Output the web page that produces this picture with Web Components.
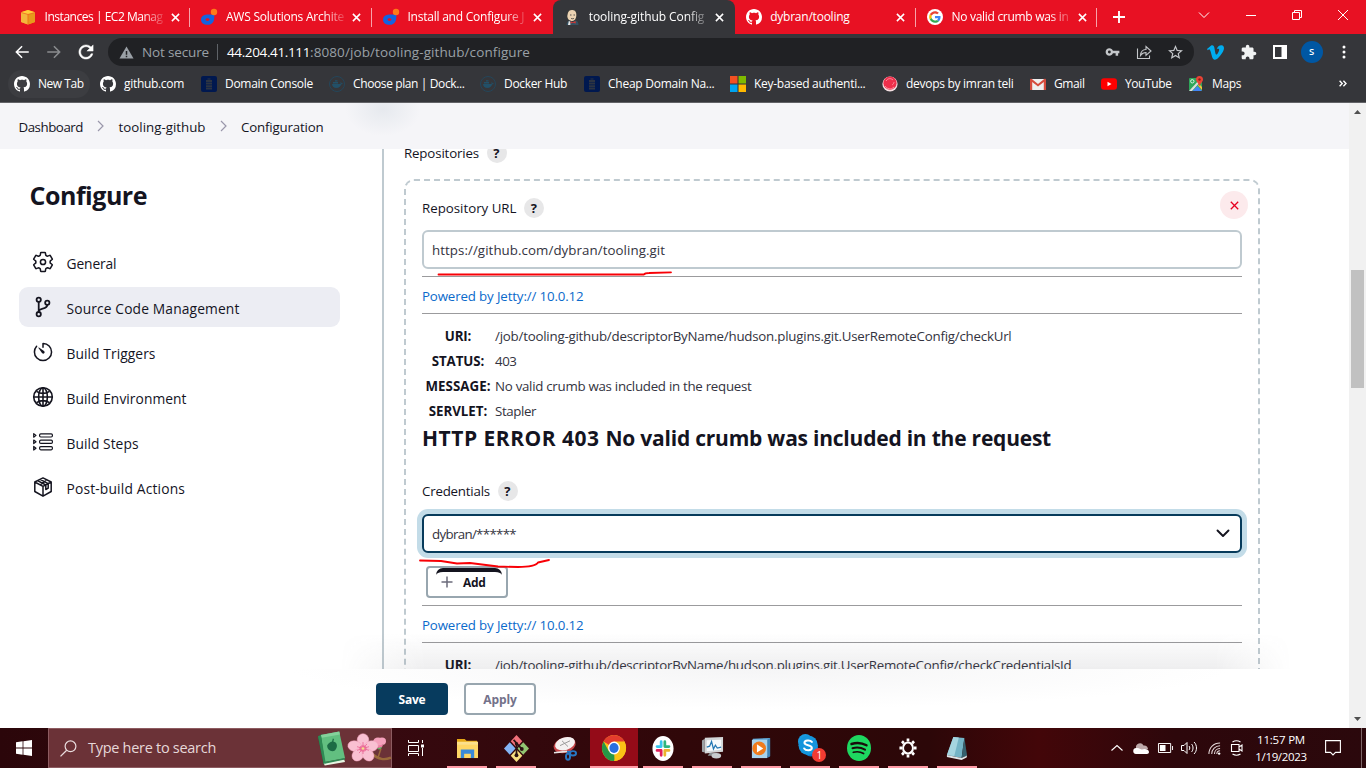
<!DOCTYPE html>
<html lang="en">
<head>
<meta charset="utf-8">
<title>tooling-github Config [Jenkins]</title>
<style>
html,body{margin:0;height:100%;overflow:hidden;background:#fff}
body{font-family:"Open Sans","Noto Sans",sans-serif}
</style>
</head>
<body>
<desktop-screen></desktop-screen>
<script>
const GH='<path fill="#fff" d="M8 0C3.58 0 0 3.58 0 8c0 3.54 2.29 6.53 5.47 7.59.4.07.55-.17.55-.38 0-.19-.01-.82-.01-1.49-2.01.37-2.53-.49-2.69-.94-.09-.23-.48-.94-.82-1.13-.28-.15-.68-.52-.01-.53.63-.01 1.08.58 1.23.82.72 1.21 1.87.87 2.33.66.07-.52.28-.87.51-1.07-1.78-.2-3.64-.89-3.64-3.95 0-.87.31-1.59.82-2.15-.08-.2-.36-1.02.08-2.12 0 0 .67-.21 2.2.82.64-.18 1.32-.27 2-.27s1.36.09 2 .27c1.53-1.04 2.2-.82 2.2-.82.44 1.1.16 1.92.08 2.12.51.56.82 1.27.82 2.15 0 3.07-1.87 3.75-3.65 3.95.29.25.54.73.54 1.48 0 1.07-.01 1.93-.01 2.2 0 .21.15.46.55.38A8.01 8.01 0 0 0 16 8c0-4.42-3.58-8-8-8z"/>';
/* name: [viewBox, markup] */
const ICONS={
github:['0 0 16 16',GH],
ec2:['0 0 16 16','<path fill="#f9a90f" d="M1 3.2 8 1l7 2.2v9.9L8 15.5 1 13.1z"/><path fill="#f3b73c" d="M1 3.6 7.7 5.4v10L1 13.1z"/><path fill="#e79a1c" d="M8.3 5.4 15 3.6v9.5l-6.7 2.4z"/><path fill="#ffce3a" d="M1 3.3 8 1l7 2.3-7 1.9z"/><path stroke="#e8402a" stroke-width=".5" fill="none" d="M1 3.5 8 5.4l7-1.9M8 5.4v10"/>'],
drop:['0 0 16 16','<path fill="#1463e0" d="M13.200 5.200C13.800 11 12.500 15.800 6.500 15.800 2.700 15.800 0 13.800 0 10.800 0 7.500 2.500 5.700 6 5.500c3-.2 5.200.3 7.200-.3z"/><circle cx="13" cy="3" r="3.200" fill="#ff7a18"/><ellipse cx="6.500" cy="10.600" rx="1.900" ry="1.400" fill="#e81123"/>'],
jenkins:['0 0 16 16','<path fill="#3a3a38" d="M2.800 6C2.500 2 5 0 8.500.2c3.500.2 5 2.600 4.800 6.300l-.8 5H4z"/><path fill="#ecd3b2" d="M3.800 4.500C4.300 2 6.300.9 8.500 1.100c3 .3 4.200 2.600 3.800 6-.3 2.600-1.500 4.800-4 4.800-2.600 0-5-2-5-5z"/><path fill="#335061" d="M2.500 16c0-2.500 1.500-4 3.500-4.500L8.500 13l3-1.500c2 .5 3 2 3 4.500z"/><path fill="#d33833" d="m6.500 12.200 2.300 1.100 2.700-1.300.3 2.500-2.700-.8-2.600.9z"/><path stroke="#333" stroke-width=".8" fill="none" d="M6 6h1.500M9.500 6H11M7 9.300c1 .6 2 .6 3 0"/><path fill="#e5e5e5" d="m4.800 12 1.300.5.3 3.500H4z"/>'],
google:['-4 -4 56 56','<circle cx="24" cy="24" r="28" fill="#fff"/><g transform="translate(3.500 3.500) scale(.85)"><path fill="#EA4335" d="M24 9.500c3.540 0 6.710 1.220 9.210 3.600l6.850-6.850C35.900 2.380 30.470 0 24 0 14.620 0 6.510 5.380 2.560 13.220l7.980 6.190C12.430 13.720 17.740 9.500 24 9.500z"/><path fill="#4285F4" d="M46.980 24.550c0-1.570-.15-3.090-.38-4.550H24v9.020h12.940c-.58 2.960-2.260 5.480-4.780 7.180l7.730 6c4.510-4.180 7.090-10.360 7.090-17.650z"/><path fill="#FBBC05" d="M10.530 28.590c-.48-1.450-.76-2.990-.76-4.590s.27-3.140.76-4.590l-7.980-6.190C.92 16.460 0 20.120 0 24c0 3.880.92 7.540 2.560 10.780l7.970-6.190z"/><path fill="#34A853" d="M24 48c6.480 0 11.930-2.130 15.890-5.810l-7.730-6c-2.150 1.450-4.920 2.300-8.160 2.300-6.260 0-11.570-4.220-13.470-9.910l-7.980 6.190C6.510 42.620 14.620 48 24 48z"/></g>'],
close:['0 0 10 10','<path stroke="currentColor" stroke-width="1.700" d="m1 1 8 8M9 1 1 9"/>'],
thinclose:['0 0 10 10','<path stroke="currentColor" stroke-width="1" d="m0 0 10 10M10 0 0 10"/>'],
plus:['0 0 14 14','<path stroke="currentColor" stroke-width="2.200" d="M7 0v14M0 7h14"/>'],
down:['0 0 12 12','<path stroke="currentColor" fill="none" d="m1 3.500 5 5 5-5"/>'],
min:['0 0 10 10','<path stroke="currentColor" d="M0 5.500h10"/>'],
restore:['0 0 10 10','<path stroke="currentColor" fill="none" d="M.5 2.500h7v7h-7zM2.500 2.500v-2h7v7h-2"/>'],
back:['0 0 24 24','<path fill="currentColor" d="M21 11H6.830l6-6-1.430-1.400L3 12l8.400 8.400 1.430-1.400-6-6H21z"/>'],
fwd:['0 0 24 24','<path fill="currentColor" d="M3 11h14.170l-6-6 1.430-1.400L21 12l-8.400 8.400-1.430-1.400 6-6H3z"/>'],
reload:['3 3 18 18','<path fill="currentColor" stroke="currentColor" stroke-width=".5" d="M17.650 6.350C16.200 4.900 14.210 4 12 4c-4.420 0-7.990 3.580-7.990 8s3.570 8 7.990 8c3.730 0 6.840-2.550 7.730-6h-2.080c-.82 2.330-3.040 4-5.650 4-3.310 0-6-2.690-6-6s2.690-6 6-6c1.660 0 3.140.69 4.220 1.780L13 11h7V4l-2.350 2.350z"/>'],
warn:['0 0 16 14','<path fill="#9aa0a6" d="M8 .5 15.500 13.500H.5z"/><path fill="#202124" d="M7.200 5.500h1.600v4H7.200zM7.200 10.500h1.600V12H7.200z"/>'],
key:['0 4 24 16','<path fill="currentColor" d="M12.650 10C11.830 7.670 9.610 6 7 6c-3.310 0-6 2.690-6 6s2.690 6 6 6c2.610 0 4.830-1.670 5.650-4H17v4h4v-4h2v-4H12.650zM7 14.300a2.300 2.300 0 1 1 0-4.600 2.300 2.300 0 0 1 0 4.600z"/>'],
share:['0 0 16 16','<path fill="none" stroke="currentColor" stroke-width="1.100" d="M1.500 4.500v10h12v-3M4.500 11.500c.3-4 2.200-6 5.500-6V2.500L15 7l-5 4.300V8.500c-2.500 0-4 .8-5.500 3z"/>'],
star:['2 2 20 19','<path fill="currentColor" d="M22 9.240l-7.190-.62L12 2 9.190 8.630 2 9.240l5.460 4.730L5.820 21 12 17.270 18.180 21l-1.630-7.030L22 9.240zM12 15.400l-3.760 2.270 1-4.280-3.320-2.880 4.380-.38L12 6.100l1.710 4.040 4.380.38-3.320 2.880 1 4.280L12 15.400z"/>'],
vimeo:['0 0 24 24','<path fill="#00adef" d="M23.977 6.416c-.105 2.338-1.739 5.543-4.894 9.609-3.268 4.247-6.026 6.370-8.290 6.370-1.409 0-2.578-1.294-3.553-3.881L5.322 11.400C4.603 8.816 3.834 7.522 3.010 7.522c-.179 0-.806.378-1.881 1.132L0 7.197c1.185-1.044 2.351-2.084 3.501-3.128C5.080 2.701 6.266 1.984 7.055 1.910c1.867-.18 3.016 1.100 3.447 3.838.465 2.953.789 4.789.971 5.507.539 2.450 1.131 3.674 1.776 3.674.502 0 1.256-.796 2.265-2.385 1.004-1.589 1.540-2.797 1.612-3.628.144-1.371-.395-2.061-1.614-2.061-.574 0-1.167.121-1.777.391 1.186-3.868 3.434-5.757 6.762-5.637 2.473.06 3.628 1.664 3.493 4.797z"/>'],
puzzle:['1 0 23 23','<path fill="#f1f3f4" d="M20.500 11H19V7c0-1.100-.9-2-2-2h-4V3.500C13 2.120 11.880 1 10.500 1S8 2.120 8 3.500V5H4c-1.100 0-1.990.9-1.990 2v3.800H3.500c1.490 0 2.700 1.210 2.700 2.700s-1.210 2.700-2.700 2.700H2V20c0 1.100.9 2 2 2h3.800v-1.500c0-1.490 1.210-2.700 2.700-2.700s2.700 1.210 2.700 2.700V22H17c1.100 0 2-.9 2-2v-4h1.500c1.380 0 2.500-1.120 2.500-2.500S21.880 11 20.500 11z"/>'],
panel:['0 0 14 14','<path fill="#fff" fill-rule="evenodd" d="M0 0h14v14H0zM2 2v10h6.500V2z"/>'],
dots:['0 0 4 14','<circle cx="2" cy="2" r="1.500" fill="#fff"/><circle cx="2" cy="7" r="1.500" fill="#fff"/><circle cx="2" cy="12" r="1.500" fill="#fff"/>'],
domain:['0 0 16 16','<rect width="16" height="16" rx="2" fill="#00184f"/><path fill="#2d3442" d="M6.500 2.500h3v1h-3zM5 4h6v2H5zM5 6.600h6v2H5zM5 9.200h6v2H5zM5 11.800h6v1.600H5z"/>'],
docker:['0 0 16 16','<circle cx="8" cy="8" r="7.500" fill="none" stroke="#24465a" stroke-width="1"/><path fill="#225068" d="M3 8h8.500c.3-1 .2-1.500-.3-2.200.8.2 1.200.7 1.300 1.500.5-.1 1 0 1.300.3-.4.7-1 .9-1.700.9-.7 2.200-2.300 3.400-4.600 3.400C5 11.900 3.200 10.500 3 8zM4 6h5v1.500H4zM6 4.300h2.500v1.300H6z"/>'],
ms:['0 0 15 15','<path fill="#f25022" d="M0 0h7v7H0z"/><path fill="#7fba00" d="M8 0h7v7H8z"/><path fill="#00a4ef" d="M0 8h7v7H0z"/><path fill="#ffb900" d="M8 8h7v7H8z"/>'],
ball:['0 0 16 16','<circle cx="8" cy="8" r="7.600" fill="#f3dfe1"/><circle cx="8" cy="7.200" r="6.600" fill="#ef2f4b"/><path d="M4 5c2-3 5-3 7-1M10 9c1-.5 2-2 2-3M3 10c2 3 6 4 9 1" stroke="#ff8d9c" fill="none"/>'],
gmail:['0 0 16 16','<path fill="#eee" d="M1 3h14v11H1z"/><path fill="#d54b3d" d="M0 4c0-1 .8-1.500 1.500-1.300L8 8l6.500-5.300C15.300 2.500 16 3 16 4v10h-2.200V6L8 10.600 2.200 6v8H0z"/>'],
yt:['0 0 16 16','<rect y="2.300" width="16" height="11.400" rx="3" fill="red"/><path fill="#fff" d="m6.500 5.800 4 2.200-4 2.200z"/>'],
maps:['0 0 16 16','<rect x="1" y="2" width="13" height="13" rx="1" fill="#2fa65a"/><path fill="#dcdcdc" d="m1 15 12-13h1v2L4 15z"/><path fill="#4285f4" d="M7 12.500 9.500 10l4.500 5H4.500z"/><path fill="#f5c33b" d="m10 9.500 1.300-1.300L14 11v3z"/><circle cx="4.300" cy="5.300" r="1.700" fill="none" stroke="#fff" stroke-width=".8"/><path fill="#ea4335" d="M11.500 0a3.500 3.500 0 0 1 3.500 3.500c0 2.200-2.500 3.500-3.500 7-1-3.500-3.500-4.800-3.500-7A3.500 3.500 0 0 1 11.500 0z"/><circle cx="11.500" cy="3.500" r="1.200" fill="#8c1f17"/>'],
more:['0 0 8 7','<path fill="none" stroke="#fff" stroke-width="1.400" d="m.6.8 2.600 2.700L.6 6.200M4.400.8 7 3.500 4.400 6.200"/>'],
crumb:['0 0 7 12','<path fill="none" stroke="#9a97ab" stroke-width="1.200" d="m1 1 5 5-5 5"/>'],
gear:['32 32 448 448','<g fill="none" stroke="currentColor" stroke-width="34" stroke-linejoin="round"><circle cx="256" cy="256" r="58"/><path d="M416.390 256a154.340 154.340 0 01-1.530 20.790l45.210 35.460a10.810 10.810 0 012.450 13.750l-42.770 74a10.810 10.810 0 01-13.140 4.590l-44.900-18.080a16.110 16.110 0 00-15.170 1.750A164.480 164.480 0 01325 400.800a15.940 15.940 0 00-8.820 12.140l-6.730 47.890a11.080 11.080 0 01-10.680 9.170h-85.540a11.110 11.110 0 01-10.690-8.870l-6.720-47.820a16.070 16.070 0 00-9-12.220 155.300 155.300 0 01-21.460-12.570 16 16 0 00-15.110-1.710l-44.890 18.070a10.810 10.810 0 01-13.140-4.580l-42.770-74a10.800 10.800 0 012.450-13.750l38.210-30a16.050 16.050 0 006-14.080c-.36-4.170-.58-8.330-.58-12.500s.21-8.270.58-12.350a16 16 0 00-6.070-13.940l-38.190-30A10.810 10.810 0 0149.480 186l42.770-74a10.810 10.810 0 0113.140-4.590l44.900 18.080a16.110 16.110 0 0015.170-1.750A164.480 164.480 0 01187 111.200a15.940 15.940 0 008.820-12.140l6.730-47.890A11.080 11.080 0 01213.230 42h85.540a11.110 11.110 0 0110.690 8.870l6.720 47.820a16.070 16.070 0 009 12.220 155.300 155.300 0 0121.460 12.570 16 16 0 0015.110 1.710l44.890-18.070a10.810 10.810 0 0113.140 4.580l42.770 74a10.800 10.800 0 01-2.450 13.750l-38.210 30a16.050 16.050 0 00-6.050 14.080c.33 4.140.55 8.300.55 12.470z"/></g>'],
branch:['32 32 448 448','<g fill="none" stroke="currentColor" stroke-width="40" stroke-linecap="round"><circle cx="160" cy="96" r="48"/><circle cx="160" cy="416" r="48"/><circle cx="352" cy="160" r="48"/><path d="M160 368V144M352 208c0 128-192 48-192 160"/></g>'],
timer:['32 32 448 448','<path fill="none" stroke="currentColor" stroke-width="34" stroke-linecap="round" d="M112.910 128A191.850 191.850 0 0064 254c-1.180 106.350 85.650 193.800 192 194 106.200.2 192-85.830 192-192 0-104.540-83.550-189.610-187.500-192a4.360 4.360 0 00-4.500 4.370V152"/><path fill="currentColor" d="M233.380 278.630l-79-113a8.130 8.130 0 0111.320-11.320l113 79a32.500 32.500 0 01-37.250 53.260 33.210 33.210 0 01-8.070-7.940z"/>'],
globe:['32 32 448 448','<g fill="none" stroke="currentColor" stroke-width="36"><circle cx="256" cy="256" r="208"/><ellipse cx="256" cy="256" rx="98" ry="208"/><path d="M256 48v416M48 256h416M110 130c88 55 204 55 292 0M110 382c88-55 204-55 292 0"/></g>'],
list:['0 0 20 20','<g fill="none" stroke="currentColor" stroke-width="1.200" stroke-linejoin="round"><rect x="6.600" y="1.800" width="12.800" height="3.200" rx="1.200"/><rect x="6.600" y="8.200" width="12.800" height="3.200" rx="1.200"/><rect x="6.600" y="14.600" width="12.800" height="3.200" rx="1.200"/><path d="M.7 1.600 3 3.400.7 5.200zM.7 8 3 9.800.7 11.600zM.7 14.400 3 16.200.7 18z"/></g>'],
cube:['0 0 20 20','<g fill="none" stroke="currentColor" stroke-width="1.500" stroke-linejoin="round"><path d="M10 .9 18.200 5v9.500L10 19.200 1.800 14.500V5zM1.800 5 10 9.300 18.200 5M10 9.300v9.700M4.600 3.600 12.800 8v4.500l2.400-1.300V6.700L7.200 2.300M7.200 7.900l6-4.400"/></g>'],
selchev:['0 0 14 9','<path fill="none" stroke="#14141f" stroke-width="1.900" stroke-linecap="round" stroke-linejoin="round" d="m1.500 1.500 5.500 5.500 5.500-5.500"/>'],
del:['0 0 9 9','<path stroke="#e6001f" stroke-width="1.300" d="m.8.8 7.400 7.400M8.200.8.800 8.200"/>'],
addplus:['0 0 12 12','<path stroke="#6b6b7b" stroke-width="1.500" d="M6 .5v11M.5 6h11"/>'],
win:['0 0 16 16','<path fill="#fff" d="m0 2.200 6.600-.9v6.300H0zM7.400 1.200 16 0v7.600H7.400zM0 8.400h6.600v6.300L0 13.800zM7.400 8.400H16V16l-8.600-1.200z"/>'],
search:['0 0 17 17','<circle cx="10.500" cy="6.300" r="5.400" fill="none" stroke="#e9dcdd" stroke-width="1.200"/><path stroke="#e9dcdd" stroke-width="1.300" d="M6.700 10.200.5 16.400"/>'],
book:['0 0 30 36','<path fill="#1e6b3f" d="M1 6 5 3l5 28-3 4z"/><path fill="#e8f5e2" d="m7 33 21-4 1 3-21 3.500z"/><path fill="#62bf80" d="M4 4 23 .5l6 27.500L8 32z"/><path fill="#84d19b" d="M4 4 23 .5l.8 3L5 7z"/><path fill="#2f8a54" d="m1 5.500 3-1.500 5 29-2 1z"/><path fill="#1d6b45" d="M10.500 15c1-3 5-5 7-4 4 1 4 6 1 9-3 2-8 0-8-5z"/><path stroke="#1d6b45" stroke-width="1.300" d="m16 12 1-4"/><path fill="#2f8a54" d="m8 32 20.500-4.200.5 1.500-21 4.300z"/>'],
flower:['0 0 44 36','<path fill="none" stroke="#9a6a3a" stroke-width="2.600" d="M25 24c7 6 12 7 19 4"/><path fill="none" stroke="#9a6a3a" stroke-width="1.500" d="m31 28 3-10"/><g fill="#f5a1bc"><circle cx="31" cy="11" r="5"/><circle cx="35" cy="10" r="4"/></g><path fill="#ef7fa5" d="M29 15c3 4 6 3 7-1z"/><path fill="#69b06a" d="M30 18c2 2 4 1 5-2z"/><g fill="#f9c0d2" stroke="#f2a0bb" stroke-width=".5"><ellipse cx="16" cy="8.800" rx="5.800" ry="7"/><ellipse cx="7.800" cy="15.500" rx="7" ry="5.800" transform="rotate(15 8 15.500)"/><ellipse cx="24.200" cy="15.500" rx="7" ry="5.800" transform="rotate(-15 24 15.500)"/><ellipse cx="11" cy="25" rx="5.600" ry="7" transform="rotate(30 11 25)"/><ellipse cx="21" cy="25" rx="5.600" ry="7" transform="rotate(-30 21 25)"/></g><circle cx="16" cy="18" r="3.600" fill="#ee7da3"/><path stroke="#e85f90" stroke-width=".8" d="M16 11v13M10 16l12 4M12 23l8-10M22 16l-12 4"/><circle cx="16" cy="18" r="1.400" fill="#f3df8a"/>'],
taskview:['0 0 16 16','<path fill="none" stroke="#fff" d="M.5 0v2.500h10V0M.5 5.500h10v6H.5zM.5 16v-2.500h10V16M14.500 0v3M14.500 8v8"/><path fill="#fff" d="M13 4.500h3v3h-3z"/>'],
folder:['0 0 22 22','<path fill="#e6a817" d="M0 1h8l2 2h11v4H0z"/><path fill="#ffd765" d="M0 4h22v17H0z"/><path fill="#fce08b" d="M0 4h22v3H0z"/><path fill="#3b8ad8" d="M4 12h14v9h-3.500v-4.500h-7V21H4z"/>'],
git:['0 0 26 28','<path fill="#f2707a" d="m13 0 6 6.500-6 6.500-6-6.500z"/><path fill="#84b4f5" d="m6 7.500 6 6.500-6 6.500L0 14z"/><path fill="#93c572" d="m20 7.500 6 6.500-6 6.500L14 14z"/><path fill="#f8e080" d="m13 15 6 6.500-6 6.500-6-6.500z"/><path stroke="#2a1212" stroke-width="1.800" fill="none" d="M10 5l8 9M13 8v13"/><circle cx="13" cy="21" r="2" fill="#2a1212"/><circle cx="18.500" cy="14.500" r="2" fill="#2a1212"/><circle cx="13" cy="9" r="1.700" fill="#2a1212"/>'],
snip:['0 0 24 26','<ellipse cx="11.500" cy="9.500" rx="11.300" ry="7.800" fill="#c8464a" transform="rotate(-18 12 9)"/><ellipse cx="12" cy="8" rx="10.300" ry="6.500" fill="#f4f1f1" transform="rotate(-18 12 8)"/><path stroke="#999" d="m7 10 10-5M9 5l6 6"/><path stroke="#e5e5e5" stroke-width="1.600" d="m1 17.500 13-1.500"/><g fill="none" stroke="#2877c4" stroke-width="2"><ellipse cx="15" cy="21.500" rx="2" ry="3.200"/><ellipse cx="20" cy="18" rx="3" ry="2.300"/><path d="m14 16.500 4 0"/></g>'],
chrome:['0 0 24 24','<circle cx="12" cy="12" r="12" fill="#fbc116"/><path fill="#e33b2e" d="M12 12 1.600 6A12 12 0 0 1 22.400 6z"/><path fill="#279847" d="M12 12 12.500 24A12 12 0 0 1 1.600 6l5.200 9z"/><path fill="#fbc116" d="M12 6h10.400A12 12 0 0 1 12 24l5.200-9z"/><circle cx="12" cy="12" r="5.900" fill="#fff"/><circle cx="12" cy="12" r="4.600" fill="#296fe0"/>'],
slack:['0 0 24 26','<ellipse cx="12" cy="13" rx="11.500" ry="13" fill="#fff"/><g stroke-width="3" stroke-linecap="round"><path stroke="#36c5f0" d="M10 6v5M5.500 11H10"/><path stroke="#2eb67d" d="M14 6v5M14 11h4.500"/><path stroke="#e01e5a" d="M10 15v5M5.500 15H10"/><path stroke="#ecb22e" d="M14 15v5M14 15h4.500"/></g>'],
monitor:['0 0 24 26','<path fill="#9da2a6" d="m1 5 3-2v15l-3-1z"/><path fill="#d3d6d8" d="M4 2 23 1v16L4 19z"/><path fill="#f6f9fb" d="M6 4.500 21 4v11L6 16.500z"/><path fill="none" stroke="#2477b3" stroke-width="1.300" d="m6 12 3-1 2-5 2 8 2-4 2 3 4-1"/><path fill="#8c9093" d="M9 18.500h6l2 3H7z"/><ellipse cx="16" cy="21.500" rx="5" ry="3" fill="#c9cccf"/>'],
media:['0 0 22 24','<path fill="#5fa8d8" d="M2 2 21 1v20L2 23z"/><path fill="#a9d3ec" d="M1 3h17v20H1z"/><path fill="#3f83b5" d="M18 3l3-2v20l-3 2z"/><circle cx="9" cy="12.500" r="7.500" fill="#f07b1c"/><path fill="#fff" d="m6.500 8 7 4.500-7 4.500z"/>'],
skype:['0 0 26 30','<circle cx="8" cy="8" r="8" fill="#1a9be0"/><circle cx="14" cy="16" r="8" fill="#0a74c4"/><circle cx="11" cy="12" r="10.500" fill="#1495dc"/><path fill="none" stroke="#fff" stroke-width="2.200" stroke-linecap="round" d="M15 8.500c-2-2.500-8-2-8 1 0 3.500 8 1.800 8 5.500 0 3-6.500 3.300-8.300.5"/>'],
spotify:['0 0 24 26','<ellipse cx="12" cy="13" rx="12" ry="13" fill="#1ed760"/><g fill="none" stroke="#190a0b" stroke-linecap="round"><path stroke-width="2.400" d="M4.500 9c5-1.700 10.500-1.200 15 1.300"/><path stroke-width="2" d="M5.500 13.300c4.500-1.300 8.500-.8 12.500 1.400"/><path stroke-width="1.700" d="M6.300 17.300c3.500-1 7-.7 10.300 1.200"/></g>'],
cog:['0 0 20 20','<circle cx="10" cy="10" r="5.500" fill="none" stroke="#fff" stroke-width="2.200"/><path stroke="#fff" stroke-width="3" d="M10 .5v3M10 16.500v3M.5 10h3M16.500 10h3M3.300 3.300l2.100 2.100M14.600 14.600l2.100 2.100M3.300 16.700l2.100-2.100M14.600 5.400l2.100-2.100"/>'],
note:['0 0 24 24','<path fill="#74b4c6" d="m8 1 12 1-3 20L1 19z"/><path fill="#a5d5e0" d="m8 1 6 .6L9 20l-8-1z"/><path fill="#35616e" d="m20 1.500 3 18-6 2.500z"/><path fill="#dfe6e8" d="m1 19 16 3 6-2.500-.5 2L17 24 1 21z"/>'],
up:['0 0 12 8','<path fill="none" stroke="#fff" stroke-width="1.100" d="m.5 6.500 5.500-5 5.500 5"/>'],
cloud:['0 0 16 11','<path fill="#bda9aa" d="M3 5a4 4 0 0 1 7.500-2.500C13 2 15 4 15 6l-9 2z"/><path fill="#fff" d="M3 11a3 3 0 0 1 .5-6C6 4.500 7 6 9 6.500c3-1.500 7 0 7 2.500 0 1.200-1 2-2 2z"/>'],
battery:['0 0 16 10','<path fill="none" stroke="#fff" d="M.5.5h13v9H.5zM15.500 3v4"/><path fill="#fff" d="M2 2h6v6H2z"/>'],
speaker:['0 0 17 14','<path fill="none" stroke="#fff" d="M.5 4.500h2.500l3-3v11l-3-3H.500zM8 5c1 1 1 3 0 4M10.500 3c2 2 2 6 0 8M13 1c3.300 3 3.300 9 0 12"/>'],
wifi:['0 0 14 14','<g fill="none" stroke="#e7dadb" stroke-width="1.100"><path d="M1 13C1 6 6 1 13 1M4 13c0-5 4-9 9-9M7 13c0-3.500 2.500-6 6-6"/><path d="M9.500 13c0-2 1.500-3.500 3.500-3.500"/></g><circle cx="12" cy="12.500" r="1.300" fill="#fff"/>'],
cam:['0 0 12 16','<path fill="none" stroke="#fff" stroke-width="1.100" d="M.5 4.500h7.500v7H.5zM8 7l3-2v6L8 9M1.500 2c2.500-1.500 5.500-1.500 8 0M1.500 14c2.500 1.500 5.500 1.500 8 0"/>'],
notif:['0 0 16 16','<path fill="none" stroke="#fff" stroke-width="1.100" d="M.6.6h14.800v11.800h-4.900L8 15l-2.500-2.600H.6z"/>'],
tri:['0 0 8 4','<path fill="#505050" d="M0 4 4 0l4 4z"/>']
};
const fits=[];
const el=(name,css,html,after)=>customElements.define(name,class extends HTMLElement{
  constructor(){super();this.attachShadow({mode:'open'});}
  connectedCallback(){
    if(this.shadowRoot.firstChild)return;
    const t=document.createElement('template');
    t.innerHTML='<style>*{box-sizing:border-box}'+css+'</style>'+(typeof html==='function'?html(this):html);
    this.shadowRoot.append(t.content.cloneNode(true));
    if(after)after(this);
  }
});
const ic=(n,w,h=w,c='')=>`<ui-icon name="${n}" w="${w}" h="${h}" style="${c}"></ui-icon>`;
const tx=(s,w,c='')=>`<ui-text w="${w}" style="${c}">${s}</ui-text>`;

el('ui-text',':host{display:inline-block;white-space:pre;line-height:1;flex:none}span{display:inline-block;white-space:pre}','<span><slot></slot></span>',e=>fits.push(e));
el('ui-icon',':host{display:block;flex:none}svg{display:block;overflow:visible}',e=>{const[v,m]=ICONS[e.getAttribute('name')];return `<svg width="${e.getAttribute('w')}" height="${e.getAttribute('h')}" viewBox="${v}" preserveAspectRatio="none">${m}</svg>`;});

/* browser frame */
el('browser-tab',`:host{display:flex;width:181.400px;height:34px;padding:0 0 0 11px;align-items:center;color:#fff;font-size:12px;position:relative;flex:none}
 :host([sep])::after{content:"";position:absolute;right:0;top:8px;width:1px;height:19px;background:#f7a3aa}
 :host([active]){background:#35363a;border-radius:8px 8px 0 0}
 .t{width:119px;margin-left:8.600px;overflow:hidden;line-height:20px;display:flex;align-items:center;height:20px}
 :host([fade]) .t{-webkit-mask-image:linear-gradient(90deg,#000 82%,rgba(0,0,0,.15));mask-image:linear-gradient(90deg,#000 82%,rgba(0,0,0,.15))}`,
 e=>`${ic(e.getAttribute('icon'),16)}<div class="t"><slot></slot></div>${ic('close',9,9,'margin-left:7px')}`);
el('tab-strip',`:host{display:flex;height:34px;background:#e81123;padding-left:9px;align-items:center;color:#fff}
 .w{display:flex;margin-left:auto;align-items:center;height:34px;padding:0 18px 5px 0}.w ui-icon+ui-icon{margin-left:36px}`,
 `<browser-tab icon="ec2" sep fade>${tx('Instances | EC2 Manag',118)}</browser-tab><browser-tab icon="drop" sep fade>${tx('AWS Solutions Archite',118)}</browser-tab><browser-tab icon="drop" fade>${tx('Install and Configure J',117)}</browser-tab><browser-tab icon="jenkins" active fade>${tx('tooling-github Config',115.500)}</browser-tab><browser-tab icon="github" sep>${tx('dybran/tooling',79.500)}</browser-tab><browser-tab icon="google" sep fade>${tx('No valid crumb was in',117)}</browser-tab>
 ${ic('plus',12,12,'margin-left:16px')}<div class="w">${ic('down',12)}${ic('min',10)}${ic('restore',10)}${ic('thinclose',10)}</div>`);
el('tool-bar',`:host{display:flex;height:34px;align-items:center;background:#35363a;padding:0 20px 0 14px;color:#fff;font-size:13.500px}
 .o{display:flex;align-items:center;height:28px;width:1086px;margin:2px 0 0 14px;border-radius:14px;background:#202124;padding:0 10px 0 11px;color:#9aa0a6}
 .o>ui-text{margin-top:1px}
 .s{width:1px;height:16px;background:#5f6368;margin:0 9px 0 8px}
 .r{display:flex;margin-left:auto;gap:16px;color:#c4c7ca;align-items:center;margin-right:1px}
 .e{display:flex;align-items:center;margin:2px 0 0 auto}
 .a{width:22px;height:22px;border-radius:50%;background:#0057a3;font-size:11px;display:grid;place-items:center;margin:0 19px 0 14px}`,
 `${ic('back',18,18,'margin-top:2px;margin-left:-1px')}${ic('fwd',18,18,'margin:2px 0 0 14px;color:#8a8c8f')}${ic('reload',16,16,'margin:2px 0 0 15px')}
 <div class="o">${ic('warn',15,13)}${tx('Not secure',67,'margin-left:8px')}<i class="s"></i>${tx('44.204.41.111',83,'color:#fff')}${tx(':8080/job/tooling-github/configure',220)}
 <div class="r">${ic('key',15,10)}${ic('share',16)}${ic('star',15,14)}</div></div>
 <div class="e">${ic('vimeo',17)}${ic('puzzle',16,16,'margin-left:17px')}${ic('panel',14,14,'margin-left:16px')}<div class="a">${tx('S',6,'font-size:9.500px;font-weight:600')}</div>${ic('dots',4,14)}</div>`);
el('bookmark-item',`:host{display:flex;align-items:center;gap:8px;flex:none;height:28px;font-size:12px;font-weight:500;color:#fff}:host([hot]){background:#3c3d41;border-radius:14px}`,
 e=>`${ic(e.getAttribute('icon'),16)}<slot></slot>`);
const bm=(i,w,s,tw,x='')=>`<bookmark-item icon="${i}" ${x} style="width:${w}px">${tx(s,tw)}</bookmark-item>`;
el('bookmark-bar',`:host{display:flex;height:35px;align-items:center;background:#35363a;padding:0 19px 3px 8px;border-bottom:1px solid #626367}
 bookmark-item[hot]{padding-left:6px;margin-right:10px}ui-icon{margin-left:auto}`,
 bm('github',82,'New Tab',45.500,'hot')+bm('github',101,'github.com',60)+bm('domain',128,'Domain Console',88)+bm('docker',151,'Choose plan | Dock...',111.500)+bm('docker',104,'Docker Hub',63)+bm('domain',146,'Cheap Domain Na...',106.500)+bm('ms',152,'Key-based authenti...',111.500)+bm('ball',148,'devops by imran teli',107.500)+bm('gmail',71,'Gmail',30.500)+bm('yt',87,'YouTube',46.500)+bm('maps',60,'Maps',29)+ic('more',8,7));

/* page */
el('crumb-bar',`:host{display:flex;align-items:center;height:46px;padding:3px 0 0 18.500px;background:radial-gradient(ellipse 42px 30px at 383px 6px,#e6e9ee,#f5f5f8 90%) #f5f5f8;color:#14141f;font-size:13.300px;font-weight:500}ui-icon{margin:-3px 14.500px 0 14px}`,
 tx('Dashboard',64.500)+ic('crumb',7,12)+tx('tooling-github',87)+ic('crumb',7,12)+tx('Configuration',82.500));
el('nav-item',`:host{display:flex;align-items:center;height:40px;border-radius:9px;padding-left:14px;margin-bottom:5px;font-size:13.800px;font-weight:500;color:#14141f}:host([on]){background:#ecedf3}::slotted(*){margin:3px 0 0 13.500px}`,
 e=>`${ic(e.getAttribute('icon'),20)}<slot></slot>`);
const nv=(i,s,w,x='')=>`<nav-item icon="${i}" ${x}>${tx(s,w)}</nav-item>`;
el('side-nav',`:host{display:block;width:382px;padding:33px 42px 0 19px;flex:none}.h{height:26px;display:flex;align-items:center;font-size:25px;font-weight:700;color:#14141f;margin:0 0 34px 10.500px}`,
 `<div class="h">${tx('Configure',117.500)}</div>`+nv('gear','General',50)+nv('branch','Source Code Management',173,'on')+nv('timer','Build Triggers',89)+nv('globe','Build Environment',120)+nv('list','Build Steps',72)+nv('cube','Post-build Actions',118.500));
el('help-label',`:host{display:flex;height:20px;align-items:center;font-size:13.300px;font-weight:500;color:#14141f}::slotted(*){margin-top:2px}b{width:20px;height:20px;border-radius:50%;background:#e7e7e8;display:grid;place-items:center;font-size:13px;margin-left:7.500px;font-weight:700}`,
 `<slot></slot><b>${tx('?',6.500)}</b>`);
el('error-line',`:host{display:grid;grid-template-columns:72px 1fr;column-gap:1px;height:25px;align-items:center;font-size:13.300px;color:#14141f}b{display:flex;justify-content:center}.v{color:#333340;display:flex}`,
 `<b><slot name="k"></slot></b><div class="v"><slot></slot></div>`);
const ln=(k,kw,v,w)=>`<error-line><ui-text slot="k" w="${kw}">${k}</ui-text>${tx(v,w)}</error-line>`;
el('jetty-head',`:host{display:block;margin-top:7px}.p{height:38px;border:solid #9b9b9d;border-width:1px 0;display:flex;align-items:center;padding-top:3px;color:#0b6acb;font-size:13.300px;font-weight:500}`,
 `<div class="p">${tx('Powered by Jetty:// 10.0.12',161.500)}</div>`);
el('pen-mark',`:host{position:absolute;display:block;pointer-events:none}svg{display:block;overflow:visible}`,
 e=>`<svg width="10" height="10"><path d="${e.getAttribute('d')}" fill="none" stroke="#f80006" stroke-width="1.800" stroke-linecap="round" stroke-linejoin="round"/></svg>`);
el('text-field',`:host{display:flex;height:39px;border:2px solid #bfcad0;border-radius:6px;background:#fff;align-items:center;padding:2px 10px 0 8px;color:#333340;font-size:13.300px;position:relative}
 :host([focus]){border-color:#073b5b;box-shadow:0 0 0 5px #c3dce8}.c{margin:-2px 0 0 auto}`,
 e=>`<slot></slot>${e.hasAttribute('focus')?`<span class="c">${ic('selchev',14,9)}</span>`:''}`);
el('add-button',`:host{display:flex;position:relative;width:82px;height:32px;border:2px solid #98a6af;border-radius:4px;align-items:center;padding-left:13px;font-size:12px;font-weight:700;color:#14141f;background:#fff}
 .arc{position:absolute;left:8px;top:0;width:66px;height:7px;border-top:4px solid #14141f;border-radius:9px 9px 0 0}
 ui-text{margin:1px 0 0 10px}`,
 `<i class="arc"></i>${ic('addplus',12)}${tx('Add',22.500)}`);
el('repo-box',`:host{display:block;border:2px dashed #bfcad0;border-radius:10px;padding:10px 16px 0;height:560px;position:relative}
 .top{display:flex;height:28px;align-items:flex-start;justify-content:space-between}.top help-label{margin-top:7px}
 .d{width:28px;height:28px;border-radius:50%;background:#fceaec;display:grid;place-items:center;margin-right:-6px}
 .rows{padding-top:10px}h2{margin:0;height:28px;display:flex;align-items:center;font-size:21px;color:#14141f;font-weight:700}`,
 `<div class="top"><help-label>${tx('Repository URL',94.500)}</help-label><div class="d">${ic('del',9)}</div></div>
 <text-field style="margin-top:11px">${tx('https://github.com/dybran/tooling.git',233)}</text-field>
 <jetty-head></jetty-head>
 <div class="rows">${ln('URI:',26.500,'/job/tooling-github/descriptorByName/hudson.plugins.git.UserRemoteConfig/checkUrl',516.500)}${ln('STATUS:',52.500,'403',21.500)}${ln('MESSAGE:',65,'No valid crumb was included in the request',256.500)}${ln('SERVLET:',58.500,'Stapler',41)}</div>
 <h2>${tx('HTTP ERROR 403 ',183.500)}${tx('No valid crumb was included in the request',445.500)}</h2>
 <help-label style="margin-top:29px">${tx('Credentials',68)}</help-label>
 <text-field focus style="margin-top:13px">${tx('dybran/******',84)}</text-field>
 <add-button style="margin:13px 0 0 4px"></add-button>
 <jetty-head></jetty-head>
 <div class="rows">${ln('URI:',26.500,'/job/tooling-github/descriptorByName/hudson.plugins.git.UserRemoteConfig/checkCredentialsId',576.500)}</div>
 <pen-mark style="left:0;top:0" d="M32.500 93.500H238Q239 92 243 92 L265 91.300"></pen-mark>
 <pen-mark style="left:0;top:0" d="M14 379.500L35 380L51 382.500L64 382L92 385.500L112 386Q129 386 132 381.500L143 379"></pen-mark>`);
el('config-form',`:host{display:block;flex:1;border-left:2px solid #bfcad0;padding:0 89px 0 20px;min-width:0}help-label{margin:-6px 0 16px}`,
 `<help-label>${tx('Repositories',75)}</help-label><repo-box></repo-box>`);
el('save-bar',`:host{display:flex;height:59px;padding:14px 0 0 376px;gap:16px;background:radial-gradient(ellipse 470px 40px at 760px 0,#f5f5f6,rgba(255,255,255,0)) #fff}
 button{font:700 12px "Open Sans","Noto Sans",sans-serif;width:72px;height:32px;border-radius:4px;border:0;background:#073b5e;color:#fff;padding:0}
 .a{background:#fff;border:2px solid #98a6af;color:#73718a}`,
 `<button>${tx('Save',27)}</button><button class="a">${tx('Apply',33.500)}</button>`);
el('scroll-rail',`:host{display:flex;flex-direction:column;width:17px;background:#f1f1f1;align-items:center;flex:none;padding:7px 0}.t{width:13px;height:118px;background:#c1c1c1;margin:156px 0 auto}`,
 `${ic('tri',7,4)}<div class="t"></div>${ic('tri',7,4,'transform:scaleY(-1)')}`);
el('jenkins-page',`:host{display:flex;height:625px;background:#fff}.m{flex:1;display:flex;flex-direction:column;min-width:0}
 .b{display:flex;height:520px;overflow:hidden;position:relative}
 .b::after{content:"";position:absolute;left:340px;right:58px;bottom:0;height:36px;background:linear-gradient(rgba(90,90,100,0),rgba(90,90,100,.1));-webkit-mask-image:linear-gradient(90deg,transparent,#000 9%,#000 92%,transparent);mask-image:linear-gradient(90deg,transparent,#000 9%,#000 92%,transparent)}`,
 `<div class="m"><crumb-bar></crumb-bar><div class="b"><side-nav></side-nav><config-form></config-form></div><save-bar></save-bar></div><scroll-rail></scroll-rail>`);

/* taskbar */
el('task-app',`:host{display:grid;place-items:center;width:48px;height:40px;margin-right:1px;position:relative;flex:none}:host([on]){background:#940b18}
 :host([run])::after{content:"";position:absolute;left:4px;right:4px;bottom:0;height:2px;background:#ff9ba6}:host([on])::after{left:0;right:0}
 i{position:absolute;left:26px;top:20px;width:14px;height:14px;border-radius:50%;background:#f23b32;display:grid;place-items:center;font-style:normal;font-size:10px;color:#fff}`,
 e=>ic(e.getAttribute('icon'),e.getAttribute('w'),e.getAttribute('h'))+(e.hasAttribute('badge')?`<i>${tx('1',5)}</i>`:''));
const ap=(i,w,h,x='run')=>`<task-app icon="${i}" w="${w}" h="${h}" ${x}></task-app>`;
el('task-bar',`:host{display:flex;height:40px;align-items:center;background:linear-gradient(90deg,#2b060a,#36090f 28%,#300709 50%,#2c0708 68%,#430609 76%,#2d070b 86%,#2b080c);color:#fff}
 .st{width:48px;display:grid;place-items:center}
 .se{display:flex;align-items:center;width:344px;height:40px;background:#6b3237;border:1px solid #8d5b60;padding-left:11px;font-size:14.500px;color:#e6d8d9}
 .tv{width:51px;padding-left:16px}
 .tr{display:flex;align-items:center;margin-left:auto}
 .ck{display:flex;flex-direction:column;align-items:center;gap:5.500px;font-size:11.500px;width:64px}
 .ed{width:5px;height:40px;border-left:1px solid #7d6567;margin-left:20px}`,
 `<div class="st">${ic('win',16)}</div><div class="se">${ic('search',17)}${tx('Type here to search',128,'margin:1px 0 0 11px')}${ic('book',29,35,'margin-left:auto')}${ic('flower',44,33,'margin-left:1px')}</div>
 <div class="tv">${ic('taskview',16)}</div>`
 +ap('folder',21,21)+ap('git',25,27)+ap('snip',24,25,'')+ap('chrome',24,26,'run on')+ap('slack',22,25)+ap('monitor',23,24)+ap('media',20,22)+ap('skype',24,28,'run badge')+ap('spotify',24,26)+ap('cog',18,20)+ap('note',22,24)
 +`<div class="tr">${ic('up',12,8)}${ic('cloud',16,11,'margin-left:10px')}${ic('battery',15,10,'margin-left:9px')}${ic('speaker',17,14,'margin-left:8px')}${ic('wifi',13,13,'margin-left:10px')}${ic('cam',12,16,'margin-left:10px')}
 <div class="ck" style="margin-left:6px">${tx('11:57 PM',48)}${tx('1/19/2023',51.500)}</div>${ic('notif',16,16,'margin-left:12px')}<div class="ed"></div></div>`);
el('desktop-screen',`:host{display:grid;grid-template-rows:34px 34px 35px 625px 40px;width:1366px;height:768px;overflow:hidden}`,
 '<tab-strip></tab-strip><tool-bar></tool-bar><bookmark-bar></bookmark-bar><jenkins-page></jenkins-page><task-bar></task-bar>');

/* Track each label so that its advance width equals its w attribute. */
for(const e of fits){
  const s=e.shadowRoot.querySelector('span'),w=+e.getAttribute('w'),n=e.textContent.length;
  const d=(w-s.getBoundingClientRect().width)/n;
  s.style.letterSpacing=d.toFixed(4)+'px';
}
</script>
</body>
</html>
